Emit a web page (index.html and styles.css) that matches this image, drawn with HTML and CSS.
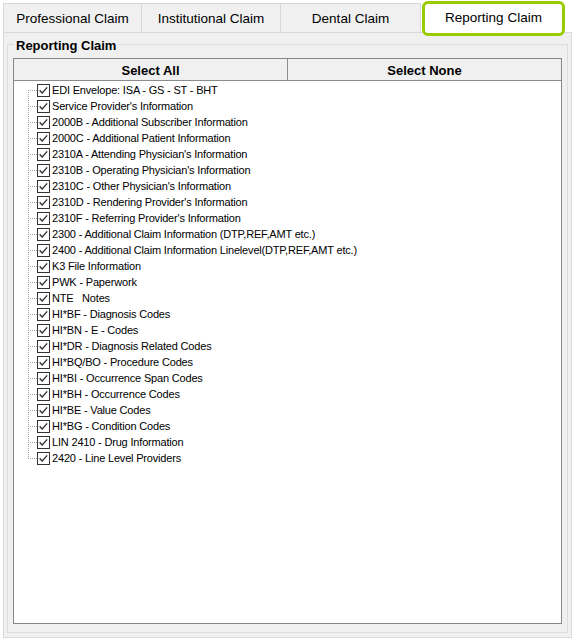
FILE: index.html
```html
<!DOCTYPE html>
<html>
<head>
<meta charset="utf-8">
<link rel="stylesheet" href="styles.css">
</head>
<body>
<div class="tabs">
  <div class="tab tab-first">Professional Claim</div>
  <div class="tab">Institutional Claim</div>
  <div class="tab tab-third">Dental Claim</div>
  <div class="tab tab-active">Reporting Claim</div>
</div>
<div class="panel">
  <div class="group">
    <div class="group-title">Reporting Claim</div>
    <div class="listbox">
      <div class="list-header">
        <div class="hcell hcell-first">Select All</div>
        <div class="hcell">Select None</div>
      </div>
      <ul class="tree" id="tree"></ul>
    </div>
  </div>
</div>
<script src="script.js"></script>
</body>
</html>
```
FILE: script.js
```js
const items = [
  "EDI Envelope: ISA - GS - ST - BHT",
  "Service Provider's Information",
  "2000B - Additional Subscriber Information",
  "2000C - Additional Patient Information",
  "2310A - Attending Physician's Information",
  "2310B - Operating Physician's Information",
  "2310C - Other Physician's Information",
  "2310D - Rendering Provider's Information",
  "2310F - Referring Provider's Information",
  "2300 - Additional Claim Information (DTP,REF,AMT etc.)",
  "2400 - Additional Claim Information Linelevel(DTP,REF,AMT etc.)",
  "K3 File Information",
  "PWK - Paperwork",
  "NTE   Notes",
  "HI*BF - Diagnosis Codes",
  "HI*BN - E - Codes",
  "HI*DR - Diagnosis Related Codes",
  "HI*BQ/BO - Procedure Codes",
  "HI*BI - Occurrence Span Codes",
  "HI*BH - Occurrence Codes",
  "HI*BE - Value Codes",
  "HI*BG - Condition Codes",
  "LIN 2410 - Drug Information",
  "2420 - Line Level Providers"
];
const tree = document.getElementById("tree");
const box = '<svg class="chk" width="13" height="13" viewBox="0 0 13 13"><rect x="0.5" y="0.5" width="12" height="12" fill="#fff" stroke="#333"/><path d="M2.6 6.3 L5.2 9 L10.2 3.4" fill="none" stroke="#333" stroke-width="1.4"/></svg>';
items.forEach(function (t) {
  const li = document.createElement("li");
  li.className = "node";
  li.innerHTML = '<span class="branch"></span>' + box + '<span class="label"></span>';
  li.querySelector(".label").textContent = t;
  tree.appendChild(li);
});
```
FILE: styles.css
```css
html, body {
  margin: 0;
  padding: 0;
  background: #ffffff;
}
body {
  height: 641px;
  display: flex;
  flex-direction: column;
  font-family: "Liberation Sans", Arial, sans-serif;
  color: #000;
  padding: 0 3px 3px 3px;
  box-sizing: border-box;
}
.tabs {
  display: flex;
  align-items: flex-start;
  height: 29px;
  margin-top: 3px;
  flex: none;
}
.tab {
  box-sizing: border-box;
  width: 139px;
  height: 29px;
  background: #f0f0f0;
  border-top: 1px solid #d9d9d9;
  border-right: 1px solid #d9d9d9;
  font-size: 13.5px;
  display: flex;
  align-items: center;
  justify-content: center;
  padding-top: 1px;
}
.tab-first {
  border-left: 1px solid #d9d9d9;
}
.tab-third {
  width: 140px;
}
.tab-active {
  position: relative;
  z-index: 2;
  width: 143px;
  height: 35px;
  margin-top: -2px;
  margin-left: 1px;
  background: #ffffff;
  border: 3px solid #99cc00;
  border-radius: 6px;
  padding-top: 0;
  padding-bottom: 3px;
}
.panel {
  flex: 1;
  display: flex;
  flex-direction: column;
  background: #f0f0f0;
  border: 1px solid #d9d9d9;
  padding: 0 3px 4px 3px;
  min-height: 0;
}
.group {
  flex: 1;
  display: flex;
  flex-direction: column;
  margin-top: 11px;
  border: 1px solid #dcdcdc;
  padding: 0 5px 8px 5px;
  min-height: 0;
}
.group-title {
  align-self: flex-start;
  margin: -7px 0 0 1px;
  padding: 0 2px;
  background: #f0f0f0;
  font-weight: bold;
  font-size: 13px;
  line-height: 16px;
}
.listbox {
  flex: 1;
  margin-top: 4px;
  background: #ffffff;
  border: 1px solid #828790;
  display: flex;
  flex-direction: column;
  min-height: 0;
}
.list-header {
  display: grid;
  grid-template-columns: 274px 1fr;
  height: 22px;
  box-sizing: border-box;
  background: #f0f0f0;
  border-bottom: 1px solid #8c8c8c;
}
.hcell {
  display: flex;
  align-items: center;
  justify-content: center;
  font-weight: bold;
  font-size: 13px;
  padding-top: 1px;
}
.hcell-first {
  border-right: 1px solid #8c8c8c;
}
.tree {
  list-style: none;
  margin: 0;
  padding: 1px 0 0 14px;
}
.node {
  display: flex;
  align-items: center;
  height: 16px;
}
.branch {
  width: 9px;
  height: 16px;
  flex: none;
  background:
    repeating-linear-gradient(to right, #a0a0a0 0 1px, transparent 1px 2px) no-repeat 0 8px / 9px 1px,
    repeating-linear-gradient(to bottom, #a0a0a0 0 1px, transparent 1px 2px) no-repeat 0 0 / 1px 16px;
}
.node:first-child .branch {
  background:
    repeating-linear-gradient(to right, #a0a0a0 0 1px, transparent 1px 2px) no-repeat 0 8px / 9px 1px,
    repeating-linear-gradient(to bottom, #a0a0a0 0 1px, transparent 1px 2px) no-repeat 0 8px / 1px 8px;
}
.node:last-child .branch {
  background:
    repeating-linear-gradient(to right, #a0a0a0 0 1px, transparent 1px 2px) no-repeat 0 8px / 9px 1px,
    repeating-linear-gradient(to bottom, #a0a0a0 0 1px, transparent 1px 2px) no-repeat 0 0 / 1px 9px;
}
.chk {
  flex: none;
  display: block;
}
.label {
  margin-left: 2px;
  font-size: 11px;
  letter-spacing: -0.18px;
  white-space: pre;
  line-height: 16px;
}
```
